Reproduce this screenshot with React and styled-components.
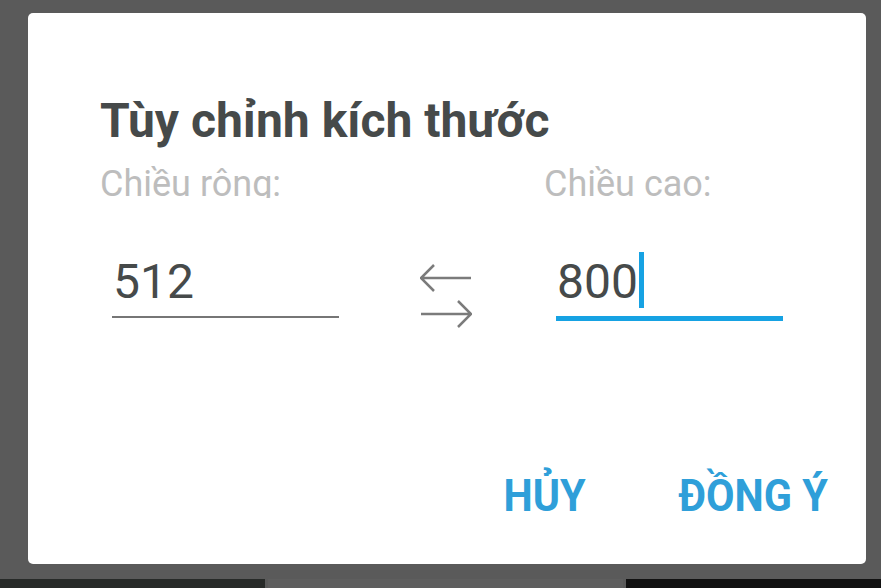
import React from 'react'
import styled, { createGlobalStyle } from 'styled-components'

const COLOR = {
  BACKDROP: '#5a5a5a',
  WHITE: '#ffffff',
  TITLE: '#464a4a',
  LABEL: '#bdbdbd',
  LINE: '#767676',
  FOCUS: '#16a2e3',
  ACTION: '#2f9fd9',
  ARROW: '#7b7b7b',
}

const GlobalStyle = createGlobalStyle`
  html, body {
    margin: 0;
    padding: 0;
    background: ${COLOR.BACKDROP};
  }
`

const SwapArrows = () => (
  <ArrowBox viewBox='0 0 52 64' width='52' height='64'>
    <path d='M1 14 H51 M14 1 L1 14 L14 27' />
    <path d='M1 50 H51 M38 37 L51 50 L38 63' />
  </ArrowBox>
)

const Field = ({ label, value, focused }) => (
  <FieldWrap>
    <Label>{label}</Label>
    <InputBox>
      <Value>{value}</Value>
      {focused && <Caret />}
    </InputBox>
    <Underline focused={focused} />
  </FieldWrap>
)

const App = () => (
  <Page>
    <GlobalStyle />
    <Dialog>
      <Title>Tùy chỉnh kích thước</Title>
      <Fields>
        <Field label='Chiều rộng:' value='512' />
        <SwapArrows />
        <Field label='Chiều cao:' value='800' focused />
      </Fields>
      <Actions>
        <ActionButton><Condensed>HỦY</Condensed></ActionButton>
        <ActionButton><Condensed>ĐỒNG Ý</Condensed></ActionButton>
      </Actions>
    </Dialog>
    <Taskbar>
      <TaskSlot tone='#272a28' size='265px' />
      <TaskSlot tone='#5e5e5e' size='355px' />
      <TaskSlot tone='#111111' />
    </Taskbar>
  </Page>
)

const Page = styled.div`
  display: flex;
  flex-direction: column;
  height: 588px;
  overflow: hidden;
  background: ${COLOR.BACKDROP};
  font-family: Roboto, 'Noto Sans', sans-serif;
`

const Dialog = styled.div`
  display: flex;
  flex-direction: column;
  box-sizing: border-box;
  height: 551px;
  margin: 13px 15px 0 28px;
  padding: 84px 37px 0 72px;
  background: ${COLOR.WHITE};
  border-radius: 5px;
`

const Title = styled.h1`
  margin: 0;
  font-size: 48px;
  line-height: 48px;
  font-weight: 700;
  color: ${COLOR.TITLE};
`

const Fields = styled.div`
  display: flex;
  align-items: flex-start;
  margin-top: 21px;
`

const FieldWrap = styled.div`
  display: flex;
  flex-direction: column;
  width: 240px;

  & + svg {
    margin-left: 80px;
  }

  svg + & {
    margin-left: 72px;
  }
`

// the reference crops the label just under its baseline
const Label = styled.div`
  height: 32px;
  overflow: hidden;
  font-size: 36px;
  line-height: 36px;
  color: ${COLOR.LABEL};
  white-space: nowrap;
`

const InputBox = styled.div`
  display: flex;
  align-items: center;
  height: 48px;
  margin: 60px 0 0 12px;
`

const Value = styled.span`
  padding-left: 1px;
  font-size: 48px;
  line-height: 48px;
  color: ${COLOR.TITLE};
`

const Caret = styled.span`
  width: 5px;
  height: 56px;
  margin: -4px 0 0 1px;
  background: ${COLOR.FOCUS};
`

const Underline = styled.div`
  width: 227px;
  height: ${p => (p.focused ? '5px' : '2px')};
  margin: 10px 0 0 12px;
  background: ${p => (p.focused ? COLOR.FOCUS : COLOR.LINE)};
`

const ArrowBox = styled.svg`
  flex: none;
  margin-top: 98px;
  fill: none;
  stroke: ${COLOR.ARROW};
  stroke-width: 2.5;
`

const Actions = styled.div`
  display: flex;
  justify-content: flex-end;
  align-items: flex-start;
  gap: 92px;
  margin-top: 145px;
`

const ActionButton = styled.button`
  display: flex;
  padding: 0;
  border: none;
  background: none;
  font-family: Roboto, sans-serif;
  font-size: 45px;
  line-height: 45px;
  font-weight: 700;
  color: ${COLOR.ACTION};
  cursor: pointer;
`

// no condensed face installed, so narrow the bold one
const Condensed = styled.span`
  display: block;
  margin: 0 -5px;
  transform: scaleX(0.92);
  white-space: nowrap;
`

const Taskbar = styled.div`
  display: flex;
  gap: 3px;
  height: 9px;
  margin-top: auto;
`

const TaskSlot = styled.div`
  flex: ${p => (p.size ? `0 0 ${p.size}` : '1')};
  background: ${p => p.tone};
`

export default App
